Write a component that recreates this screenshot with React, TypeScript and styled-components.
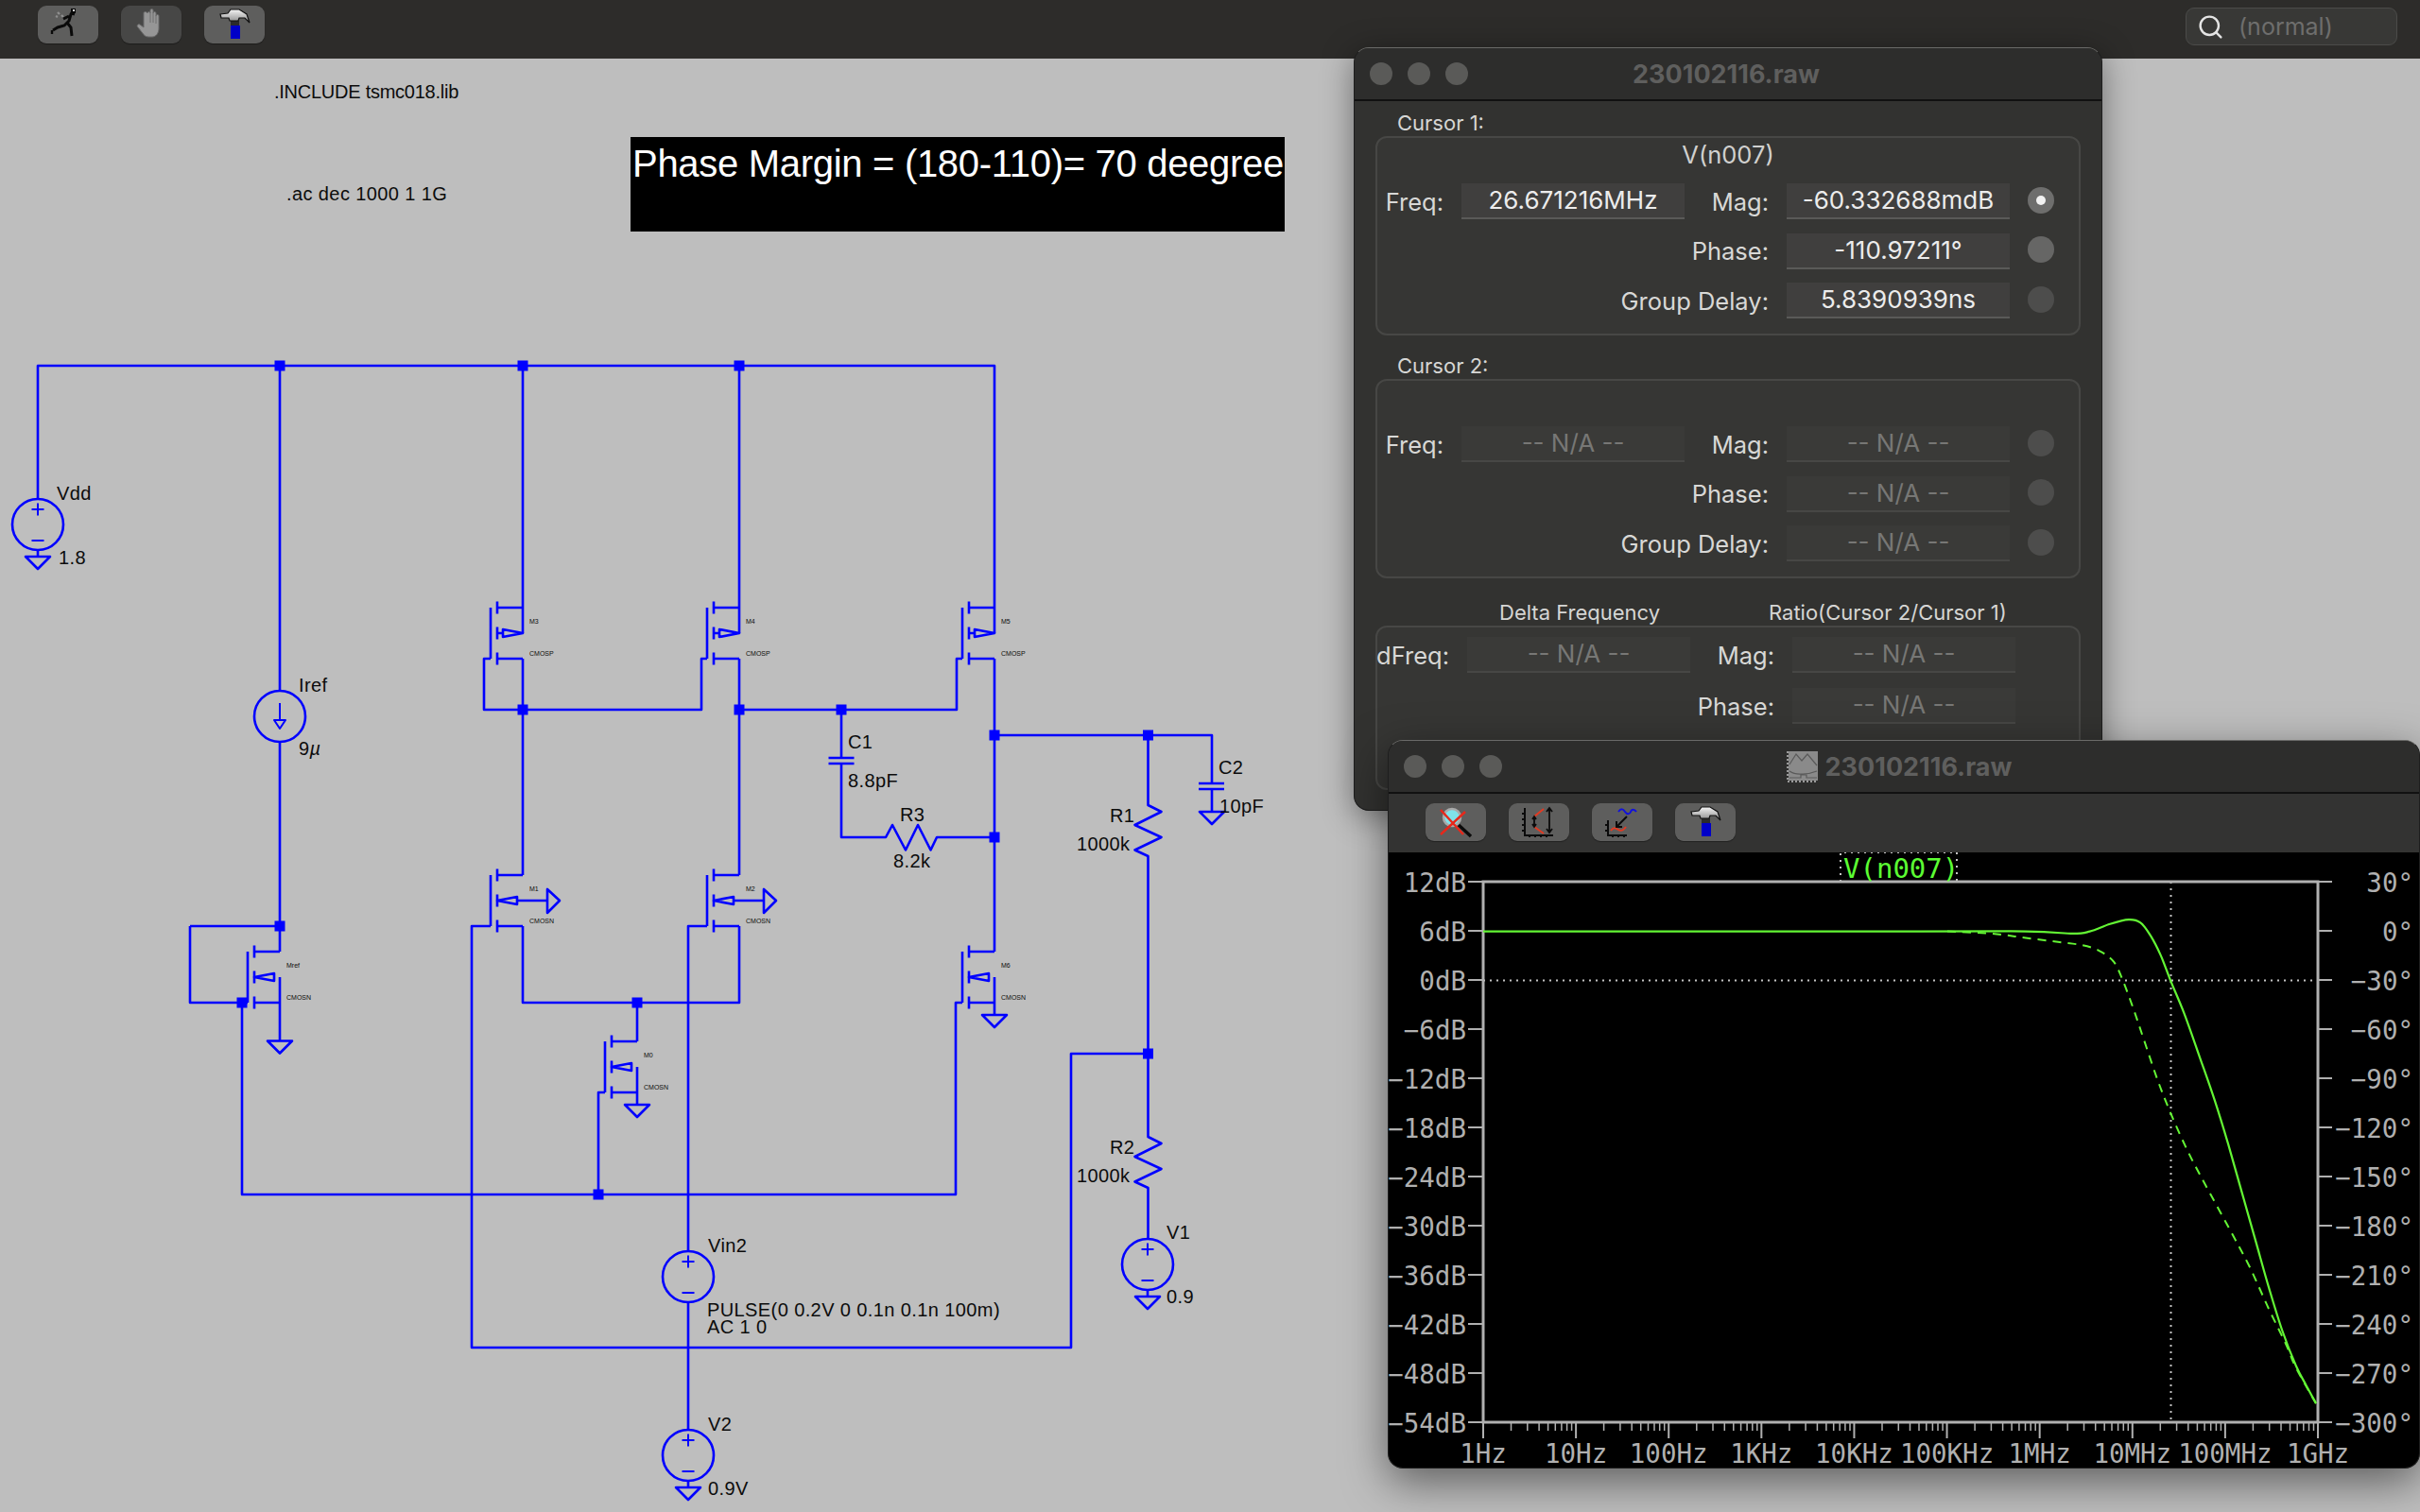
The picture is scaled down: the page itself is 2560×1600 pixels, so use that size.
import React from "react";
import styled, { createGlobalStyle } from "styled-components";
import { Search } from "lucide-react";

const GlobalStyle = createGlobalStyle`
  html, body {
    margin: 0;
    padding: 0;
    background: #bebebe;
    font-family: "Liberation Sans", Arial, sans-serif;
  }
`;

const Page = styled.div`
  position: relative;
  width: 2560px;
  height: 1600px;
  display: flex;
  flex-direction: column;
  overflow: hidden;
  background: #bebebe;
`;

const TopBar = styled.header`
  height: 62px;
  flex: none;
  box-sizing: border-box;
  padding: 6px 24px 0 40px;
  display: flex;
  align-items: flex-start;
  gap: 24px;
  background: #2d2c2a;
`;

const ToolButton = styled.button<{ $dim?: boolean }>`
  width: 64px;
  height: 40px;
  flex: none;
  padding: 0;
  border: none;
  border-radius: 9px;
  background: ${(p) => (p.$dim ? "#474746" : "#5e5e5d")};
  box-shadow: 0 1px 1px rgba(0, 0, 0, 0.35);
  svg {
    display: block;
  }
`;

const SearchBox = styled.div`
  margin-left: auto;
  margin-top: 2px;
  width: 224px;
  height: 40px;
  box-sizing: border-box;
  display: flex;
  align-items: center;
  gap: 15px;
  padding-left: 11px;
  border: 1px solid #4b4b49;
  border-radius: 9px;
  background: #383836;
  color: #e4e4e4;
  font-family: Inter, sans-serif;
  span {
    font-size: 25px;
    color: #6e6e6d;
  }
`;

const Canvas = styled.main`
  flex: 1;
  position: relative;
`;

const Schematic = styled.svg`
  display: block;
`;

const Wire = styled.path<{ $thin?: boolean }>`
  fill: none;
  stroke: #0000ff;
  stroke-width: ${(p) => (p.$thin ? 2 : 2.6)}px;
  stroke-linejoin: round;
`;

const Dot = styled.rect`
  fill: #0000ff;
`;

const Label = styled.text<{ $small?: boolean; $tight?: boolean }>`
  font-family: "Liberation Sans", Arial, sans-serif;
  font-size: ${(p) => (p.$small ? 7 : 20)}px;
  letter-spacing: ${(p) => (p.$small ? 0 : p.$tight ? -0.25 : 0.4)}px;
  fill: #0c0c0c;
  dominant-baseline: central;
`;

const NoteBox = styled.div`
  position: absolute;
  left: 667px;
  top: 83px;
  width: 692px;
  height: 100px;
  box-sizing: border-box;
  padding: 5px 0 0 2px;
  background: #000;
  color: #fff;
  font-size: 40px;
  letter-spacing: -0.3px;
  line-height: 46px;
  white-space: nowrap;
`;

const Window = styled.section<{ $left: number; $top: number; $width: number; $height: number; $shadow: string }>`
  position: absolute;
  left: ${(p) => p.$left}px;
  top: ${(p) => p.$top}px;
  width: ${(p) => p.$width}px;
  height: ${(p) => p.$height}px;
  box-sizing: border-box;
  display: flex;
  flex-direction: column;
  overflow: hidden;
  border: 1px solid #1e1e1e;
  border-top-color: #6a6a68;
  border-radius: 16px;
  background: #323230;
  box-shadow: ${(p) => p.$shadow};
`;

const TitleBar = styled.div`
  height: 56px;
  flex: none;
  box-sizing: border-box;
  display: grid;
  grid-template-columns: 1fr auto 1fr;
  align-items: center;
  border-bottom: 2px solid #111;
  background: #2d2d2c;
`;

const Lights = styled.div`
  display: flex;
  gap: 16px;
  padding-left: 16px;
`;

const Light = styled.i`
  width: 24px;
  height: 24px;
  border-radius: 50%;
  background: #5a5a58;
`;

const TitleText = styled.div<{ $nudge: number }>`
  display: flex;
  align-items: center;
  gap: 7px;
  margin-right: ${(p) => p.$nudge}px;
  font-family: Inter, sans-serif;
  font-size: 27px;
  font-weight: 700;
  color: #5f5f5e;
`;

const Panel = styled.div`
  padding: 9px 22px 0;
  display: flex;
  flex-direction: column;
  font-family: Inter, sans-serif;
  color: #dcdcdc;
`;

const Caption = styled.div<{ $gap: number }>`
  height: 28px;
  line-height: 28px;
  margin-top: ${(p) => p.$gap}px;
  padding-left: 23px;
  font-size: 22px;
  color: #d6d6d4;
`;

const HeaderCaptions = styled.div`
  height: 28px;
  line-height: 28px;
  margin-top: 22px;
  padding-left: 131px;
  display: grid;
  grid-template-columns: 285px auto;
  font-size: 22px;
  color: #d6d6d4;
`;

const GroupBox = styled.div<{ $height: number; $pad: number; $gap: number }>`
  height: ${(p) => p.$height}px;
  box-sizing: border-box;
  padding-top: ${(p) => p.$pad}px;
  display: flex;
  flex-direction: column;
  gap: ${(p) => p.$gap}px;
  position: relative;
  border: 2px solid #474745;
  border-radius: 12px;
  background: #363634;
`;

const TraceName = styled.div`
  position: absolute;
  top: 0;
  left: 0;
  right: 0;
  height: 36px;
  line-height: 36px;
  text-align: center;
  font-size: 25.5px;
  color: #d0d0ce;
`;

const Row = styled.div<{ $first: number }>`
  display: grid;
  grid-template-columns: ${(p) => p.$first}px 236px 70px 236px 28px;
  column-gap: 19px;
  align-items: center;
  height: 38px;
`;

const FieldLabel = styled.label<{ $span?: boolean }>`
  ${(p) => (p.$span ? "grid-column: 1 / 4;" : "")}
  justify-self: end;
  white-space: nowrap;
  font-size: 25.5px;
  color: #d8d8d6;
`;

const Field = styled.div<{ $off?: boolean }>`
  height: 38px;
  box-sizing: border-box;
  line-height: 35px;
  text-align: center;
  font-size: 26px;
  color: ${(p) => (p.$off ? "#777775" : "#ececec")};
  background: ${(p) => (p.$off ? "#3a3a38" : "#403f3e")};
  border-bottom: 2px solid ${(p) => (p.$off ? "#474745" : "#5a5a58")};
`;

const Radio = styled.span<{ $tone: string; $on?: boolean }>`
  width: 28px;
  height: 28px;
  margin-top: -3px;
  display: flex;
  align-items: center;
  justify-content: center;
  border-radius: 50%;
  background: ${(p) => p.$tone};
  &::after {
    content: "";
    width: 10px;
    height: 10px;
    border-radius: 50%;
    background: ${(p) => (p.$on ? "#f2f2f2" : "transparent")};
  }
`;

const PlotTools = styled.div`
  height: 62px;
  flex: none;
  box-sizing: border-box;
  padding: 10px 0 0 39px;
  display: flex;
  gap: 24px;
  background: #333332;
`;

const Plot = styled.svg`
  display: block;
  flex: 1;
  background: #000;
`;

const AxisText = styled.text<{ $green?: boolean }>`
  font-family: "DejaVu Sans Mono", monospace;
  font-size: ${(p) => (p.$green ? 29 : 27.5)}px;
  fill: ${(p) => (p.$green ? "#5cff33" : "#b0b0b0")};
  dominant-baseline: central;
`;

const AxisLine = styled.path<{ $weight: number }>`
  fill: none;
  stroke: #b0b0b0;
  stroke-width: ${(p) => p.$weight}px;
`;

const GridLine = styled.path`
  fill: none;
  stroke: #c4c4c4;
  stroke-width: 2px;
  stroke-dasharray: 2 5;
`;

const Trace = styled.path<{ $dashed?: boolean }>`
  fill: none;
  stroke: #63f534;
  stroke-width: ${(p) => (p.$dashed ? 2 : 2.2)}px;
  stroke-dasharray: ${(p) => (p.$dashed ? "9 7" : "none")};
`;

/* ---- toolbar icons ---- */

const Runner = () => (
  <svg width="64" height="40" viewBox="0 0 64 40">
    <path d="M21 7l2 2M25 10l2 2M19 11l2 1" stroke="#8f8f8f" strokeWidth="2.4" fill="none" />
    <path
      d="M38 4l-3 5-2 7-5 5-7 2-5 3M31 18l4 5 1 9M33 11l-6 3M36 8l3 1"
      stroke="#0a0a0a"
      strokeWidth="3"
      fill="none"
    />
    <rect x="35" y="3" width="5" height="5" fill="#0a0a0a" />
    <rect x="37" y="4" width="2" height="2" fill="#ddd" />
    <path d="M15 26v4" stroke="#0a0a0a" strokeWidth="2.4" />
  </svg>
);

const Hand = () => (
  <svg width="64" height="40" viewBox="0 0 64 40">
    <path
      d="M28 8c0-2 3-2 3 0V5c0-2 3-2 3 0v3c0-2 3-2 3 0v3c0-2 3-2 3 0v13c0 5-3 9-7 9h-4c-3 0-5-2-7-5l-4-5c-2-2 0-4 2-3l4 3V8c0-2 3-2 4 0z"
      fill="#969696"
      stroke="#6a6a6a"
      strokeWidth="1"
    />
    <path d="M31 8v10M34 8v10M37 11v8" stroke="#6f6f6f" strokeWidth="1" />
  </svg>
);

const Hammer = () => (
  <svg width="64" height="40" viewBox="0 0 64 40">
    <defs>
      <linearGradient id="steel" x1="0" y1="0" x2="0" y2="1">
        <stop offset="0" stopColor="#f4f4f4" />
        <stop offset="1" stopColor="#8b8b8b" />
      </linearGradient>
    </defs>
    <rect x="28" y="16" width="9" height="6" fill="#2b2b2b" />
    <rect x="28" y="21" width="10" height="14" fill="#0000c8" />
    <path
      d="M17 9l8-1 3-4h9l8 5 3 9-5-5-6 0-1 3h-9l-1-3-8 0z"
      fill="url(#steel)"
      stroke="#111"
      strokeWidth="1.2"
    />
  </svg>
);

const ZoomOut = () => (
  <svg width="64" height="40" viewBox="0 0 64 40">
    <path d="M35 23l13 12" stroke="#0b0b0b" strokeWidth="3.4" />
    <circle cx="28" cy="15" r="9" fill="#7fe3ea" stroke="#a9a9a9" strokeWidth="2.5" />
    <path d="M16 7l24 26M42 9L16 33" stroke="#e8271a" strokeWidth="2.4" />
  </svg>
);

const AutoScale = () => (
  <svg width="64" height="40" viewBox="0 0 64 40">
    <path d="M17 5v29h30" stroke="#0b0b0b" strokeWidth="2" fill="none" />
    <path d="M14 11h3M14 17h3M14 23h3M14 29h3M22 36v-2M28 36v-2M34 36v-2M40 36v-2" stroke="#0b0b0b" strokeWidth="2" />
    <path d="M27 14l10-8M27 25l10 7" stroke="#e23a22" strokeWidth="2" />
    <path d="M43 5v26M40 9l3-4 3 4M40 27l3 4 3-4M27 14v11M25 17l2-3 2 3M25 22l2 3 2-3" stroke="#0b0b0b" strokeWidth="1.8" fill="none" />
  </svg>
);

const TraceScale = () => (
  <svg width="64" height="40" viewBox="0 0 64 40">
    <path d="M17 18v16h20" stroke="#0b0b0b" strokeWidth="2" fill="none" />
    <path d="M14 23h3M14 29h3M22 36v-2M28 36v-2M34 36v-2" stroke="#0b0b0b" strokeWidth="2" />
    <path d="M20 29c3-4 5-3 8-1s5 1 8-3" stroke="#e23a22" strokeWidth="2" fill="none" />
    <path d="M28 9c3-4 5-3 7 0s5 3 6 0 4-3 6 0" stroke="#1111dd" strokeWidth="2" fill="none" />
    <path d="M37 14L26 25M26 19v6h6" stroke="#0b0b0b" strokeWidth="2" fill="none" />
  </svg>
);

const TraceIcon = () => (
  <svg width="34" height="34" viewBox="0 0 34 34">
    <rect x="2" y="1" width="31" height="31" fill="#8a8a8a" />
    <path d="M3 15l7-11 6 7 6-7 10 12M3 22c6 4 10 3 14 3s10-1 15-3M3 29h12v-3h6v3h11" stroke="#5a5a5a" strokeWidth="1.2" fill="none" />
    <path d="M1 1v32h32" stroke="#9a9a9a" strokeWidth="2" strokeDasharray="2 2" fill="none" />
  </svg>
);

/* ---- schematic parts, all in page coordinates ---- */

const Junction = ({ x, y }: { x: number; y: number }) => <Dot x={x - 5.5} y={y - 5.5} width="11" height="11" />;

const Ground = ({ x, y }: { x: number; y: number }) => (
  <Wire d={`M${x - 13} ${y}H${x + 13}L${x} ${y + 13}Z`} />
);

const VoltageSource = ({ x, y }: { x: number; y: number }) => (
  <>
    <circle cx={x} cy={y} r="27" fill="none" stroke="#0000ff" strokeWidth="2.6" />
    <Wire $thin d={`M${x - 6.5} ${y - 16}H${x + 6.5}M${x} ${y - 22.5}V${y - 9.5}M${x - 6.5} ${y + 17}H${x + 6.5}`} />
  </>
);

type MosProps = { d: number; t: number; kind: "P" | "N"; name: string; model: string };

const Mos = ({ d, t, kind, name, model }: MosProps) => {
  const mid = t + 27;
  const src = t + 54;
  const bar = d - 34;
  const ch = d - 27;
  const body =
    kind === "P"
      ? `M${ch} ${mid}H${d - 21}M${d - 21} ${mid - 4}L${d} ${mid}L${d - 21} ${mid + 4}Z`
      : `M${ch} ${mid}L${ch + 21} ${mid - 4}V${mid + 4}Z`;
  return (
    <>
      <Wire
        d={`M${bar} ${t}V${src}M${ch} ${t - 6.5}V${t + 6.5}M${ch} ${mid - 6.5}V${mid + 6.5}M${ch} ${src - 6.5}V${src + 6.5}M${ch} ${t}H${d}M${ch} ${src}H${d}`}
      />
      <Wire d={body} />
      <Label $small x={d + 7} y={t + 14.5}>
        {name}
      </Label>
      <Label $small x={d + 7} y={t + 48}>
        {model}
      </Label>
    </>
  );
};

const nets = [
  "M40 527V387H1052V643",
  "M296 387V731M296 785V1007",
  "M553 387V670",
  "M782 387V670",
  "M1052 670V643",
  "M201 980H296M201 980V1061H262",
  "M256 1061V1264H1011V1061H1018",
  // mirror gates
  "M519 697H512V751H742V697H748",
  "M782 751H1012V697H1018",
  // drains through to the diff pair
  "M553 697V926",
  "M782 697V926",
  "M1052 697V1007",
  "M296 1034V1101",
  "M674 1061V1102M674 1129V1169",
  "M553 980V1061H782V980",
  "M1052 1034V1074",
  // input pair gates
  "M519 980H499V1426H1133V1115H1214.5",
  "M748 980H728V1324M728 1378V1513",
  "M640 1156H633V1264",
  // compensation and output
  "M890 751V802M876.5 802H903.5M876.5 808H903.5M890 808V886H937L944 873L958 899.5L971 873L984.5 899.5L991 886H1052",
  "M1052 778H1282V829M1268 829H1295M1268 835H1295M1282 835V859",
  "M1214.5 778V852L1228.5 859L1200.5 873L1228.5 886L1200.5 899.5L1214.5 906V1203L1228.5 1210L1200.5 1224L1228.5 1237L1200.5 1250.5L1214.5 1257V1311",
  // pieces of source stubs
  "M40 582V589",
  "M728 1567V1574",
  "M1214 1365V1372",
  // M1, M2 bulk symbols
  "M546 953H579M579 941V966L592 953Z",
  "M775 953H808M808 941V966L821 953Z",
];

const junctions: [number, number][] = [
  [296, 387], [553, 387], [782, 387],
  [553, 751], [782, 751], [890, 751],
  [1052, 778], [1214.5, 778], [1052, 886],
  [296, 980], [256, 1061], [674, 1061],
  [633, 1264], [1214.5, 1115],
];

const texts: [string, number, number][] = [
  [".ac dec 1000 1 1G", 303, 205],
  ["Vdd", 60, 522],
  ["1.8", 62, 590],
  ["Iref", 316, 725],
  ["C1", 897, 785],
  ["8.8pF", 897, 826],
  ["R3", 952, 862],
  ["8.2k", 945, 911],
  ["C2", 1289, 812],
  ["10pF", 1290, 853],
  ["R1", 1174, 863],
  ["1000k", 1139, 893],
  ["R2", 1174, 1214],
  ["1000k", 1139, 1244],
  ["Vin2", 749, 1318],
  ["PULSE(0 0.2V 0 0.1n 0.1n 100m)", 748, 1386],
  ["AC 1 0", 748, 1404],
  ["V2", 749, 1507],
  ["0.9V", 749, 1575],
  ["V1", 1234, 1304],
  ["0.9", 1234, 1372],
];

/* ---- plot data ---- */

const solid: [number, number][] = [
  [1569, 985.6], [2000, 985.6], [2142.9, 985.6], [2192.9, 987.9], [2210.7, 985.6], [2232.1, 977.8], [2251.8, 973.2],
  [2264.3, 976.4], [2275, 990.2], [2285.7, 1010.9], [2296.4, 1038.4], [2310.7, 1072.8], [2328.6, 1123.3],
  [2342.9, 1164.7], [2357.1, 1210.6], [2371.4, 1261.1], [2385.7, 1311.6], [2400, 1362.1], [2414.3, 1408],
  [2428.6, 1444.7], [2439.3, 1465.4], [2450, 1485.1],
];

const dashed: [number, number][] = [
  [2060, 985.6], [2107, 988], [2143, 992.5], [2179, 997], [2203, 1000.3], [2221, 1006.3], [2236, 1017.7], [2246, 1038.4],
  [2257, 1068], [2268, 1100.4], [2282, 1141.7], [2296.4, 1178.4], [2314, 1217.5], [2332, 1252], [2357, 1297.8],
  [2379, 1339], [2400, 1385], [2418, 1422], [2428.6, 1447], [2450, 1485.1],
];

// catmull-rom through the sampled points
const smooth = (p: [number, number][]) => {
  let out = `M${p[0][0]} ${p[0][1]}`;
  for (let i = 0; i < p.length - 1; i++) {
    const a = p[Math.max(i - 1, 0)];
    const b = p[i];
    const c = p[i + 1];
    const e = p[Math.min(i + 2, p.length - 1)];
    const c1x = b[0] + (c[0] - a[0]) / 6;
    const c1y = b[1] + (c[1] - a[1]) / 6;
    const c2x = c[0] - (e[0] - b[0]) / 6;
    const c2y = c[1] - (e[1] - b[1]) / 6;
    out += `C${c1x.toFixed(1)} ${c1y.toFixed(1)} ${c2x.toFixed(1)} ${c2y.toFixed(1)} ${c[0]} ${c[1]}`;
  }
  return out;
};

const plotLeft = 1569;
const plotRight = 2452;
const plotTop = 933;
const plotBottom = 1505;
const rowStep = (plotBottom - plotTop) / 11;
const decade = (plotRight - plotLeft) / 9;

const dbLabels = ["12dB", "6dB", "0dB", "−6dB", "−12dB", "−18dB", "−24dB", "−30dB", "−36dB", "−42dB", "−48dB", "−54dB"];
const degLabels = ["30°", "0°", "−30°", "−60°", "−90°", "−120°", "−150°", "−180°", "−210°", "−240°", "−270°", "−300°"];
const freqLabels = ["1Hz", "10Hz", "100Hz", "1KHz", "10KHz", "100KHz", "1MHz", "10MHz", "100MHz", "1GHz"];

const majorTicks = freqLabels.map((_, i) => `M${plotLeft + i * decade} ${plotBottom}V1522`).join("");
const minorTicks = Array.from({ length: 9 }, (_, i) =>
  [2, 3, 4, 5, 6, 7, 8, 9]
    .map((n) => `M${(plotLeft + (i + Math.log10(n)) * decade).toFixed(1)} ${plotBottom}V1514`)
    .join("")
).join("");
const rowTicks = dbLabels.map((_, i) => {
  const y = plotTop + i * rowStep;
  return `M1553 ${y}H${plotLeft}M${plotRight} ${y}H2467`;
}).join("");

const CursorRows = ({ values, tones, off }: { values: string[]; tones: string[]; off?: boolean }) => (
  <>
    <Row $first={70}>
      <FieldLabel>Freq:</FieldLabel>
      <Field $off={off}>{values[0]}</Field>
      <FieldLabel>Mag:</FieldLabel>
      <Field $off={off}>{values[1]}</Field>
      <Radio $tone={tones[0]} $on={!off} />
    </Row>
    <Row $first={70}>
      <FieldLabel $span>Phase:</FieldLabel>
      <Field $off={off}>{values[2]}</Field>
      <Radio $tone={tones[1]} />
    </Row>
    <Row $first={70}>
      <FieldLabel $span>Group Delay:</FieldLabel>
      <Field $off={off}>{values[3]}</Field>
      <Radio $tone={tones[2]} />
    </Row>
  </>
);

const App = () => {
  return (
    <Page>
      <GlobalStyle />
      <TopBar>
        <ToolButton><Runner /></ToolButton>
        <ToolButton $dim><Hand /></ToolButton>
        <ToolButton><Hammer /></ToolButton>
        <SearchBox>
          <Search size={29} strokeWidth={2} />
          <span>(normal)</span>
        </SearchBox>
      </TopBar>
      <Canvas>
        <Schematic width="2560" height="1538" viewBox="0 62 2560 1538">
          {nets.map((d) => (
            <Wire key={d} d={d} />
          ))}
          {junctions.map(([x, y]) => (
            <Junction key={`${x}-${y}`} x={x} y={y} />
          ))}
          <Mos d={553} t={643} kind="P" name="M3" model="CMOSP" />
          <Mos d={782} t={643} kind="P" name="M4" model="CMOSP" />
          <Mos d={1052} t={643} kind="P" name="M5" model="CMOSP" />
          <Mos d={553} t={926} kind="N" name="M1" model="CMOSN" />
          <Mos d={782} t={926} kind="N" name="M2" model="CMOSN" />
          <Mos d={1052} t={1007} kind="N" name="M6" model="CMOSN" />
          <Mos d={296} t={1007} kind="N" name="Mref" model="CMOSN" />
          <Mos d={674} t={1102} kind="N" name="M0" model="CMOSN" />
          <VoltageSource x={40} y={555} />
          <VoltageSource x={728} y={1351} />
          <VoltageSource x={728} y={1540} />
          <VoltageSource x={1214} y={1338} />
          <circle cx="296" cy="758" r="27" fill="none" stroke="#0000ff" strokeWidth="2.6" />
          <Wire $thin d="M296 744V762M290 762H302L296 771Z" />
          <Ground x={40} y={589} />
          <Ground x={296} y={1101.5} />
          <Ground x={674} y={1169} />
          <Ground x={1052} y={1074} />
          <Ground x={1282} y={859} />
          <Ground x={728} y={1574} />
          <Ground x={1214} y={1372} />
          <Label $tight x={290} y={97}>
            .INCLUDE tsmc018.lib
          </Label>
          {texts.map(([t, x, y]) => (
            <Label key={`${t}${y}`} x={x} y={y}>
              {t}
            </Label>
          ))}
          <Label x={316} y={792}>
            9<tspan fontStyle="italic">µ</tspan>
          </Label>
        </Schematic>
        <NoteBox>Phase Margin = (180-110)= 70 deegree</NoteBox>
      </Canvas>

      <Window $left={1432} $top={50} $width={792} $height={808} $shadow="0 6px 34px rgba(0,0,0,0.42)">
        <TitleBar>
          <Lights>
            <Light />
            <Light />
            <Light />
          </Lights>
          <TitleText $nudge={4}>230102116.raw</TitleText>
        </TitleBar>
        <Panel>
          <Caption $gap={0}>Cursor 1:</Caption>
          <GroupBox $height={211} $pad={48} $gap={14.5}>
            <TraceName>V(n007)</TraceName>
            <CursorRows
              values={["26.671216MHz", "-60.332688mdB", "-110.97211°", "5.8390939ns"]}
              tones={["#6e6e6d", "#666665", "#4d4d4c"]}
            />
          </GroupBox>
          <Caption $gap={18}>Cursor 2:</Caption>
          <GroupBox $height={211} $pad={48} $gap={14.5}>
            <CursorRows
              off
              values={["-- N/A --", "-- N/A --", "-- N/A --", "-- N/A --"]}
              tones={["#4d4d4c", "#4d4d4c", "#4d4d4c"]}
            />
          </GroupBox>
          <HeaderCaptions>
            <span>Delta Frequency</span>
            <span>Ratio(Cursor 2/Cursor 1)</span>
          </HeaderCaptions>
          <GroupBox $height={174} $pad={10} $gap={16}>
            <Row $first={76}>
              <FieldLabel>dFreq:</FieldLabel>
              <Field $off>-- N/A --</Field>
              <FieldLabel>Mag:</FieldLabel>
              <Field $off>-- N/A --</Field>
            </Row>
            <Row $first={76}>
              <FieldLabel $span>Phase:</FieldLabel>
              <Field $off>-- N/A --</Field>
            </Row>
          </GroupBox>
        </Panel>
      </Window>

      <Window $left={1468} $top={783} $width={1092} $height={771} $shadow="0 14px 46px rgba(0,0,0,0.5)">
        <TitleBar>
          <Lights>
            <Light />
            <Light />
            <Light />
          </Lights>
          <TitleText $nudge={10}>
            <TraceIcon />
            230102116.raw
          </TitleText>
        </TitleBar>
        <PlotTools>
          <ToolButton><ZoomOut /></ToolButton>
          <ToolButton><AutoScale /></ToolButton>
          <ToolButton><TraceScale /></ToolButton>
          <ToolButton><Hammer /></ToolButton>
        </PlotTools>
        <Plot viewBox="1469 902 1090 651" width="1090" height="651">
          <GridLine d={`M${plotLeft} 1037.5H${plotRight}M2296.5 ${plotTop}V1502`} />
          <GridLine d="M1947 933V902H2070V933" />
          <AxisLine $weight={3} d={`M${plotLeft} ${plotBottom}V${plotTop}H${plotRight}V${plotBottom}Z`} />
          <AxisLine $weight={2} d={rowTicks} />
          <AxisLine $weight={2} d={majorTicks} />
          <AxisLine $weight={1.5} d={minorTicks} />
          <Trace d={smooth(solid)} />
          <Trace $dashed d={smooth(dashed)} />
          <AxisText $green x="1950" y="919">V(n007)</AxisText>
          {dbLabels.map((t, i) => (
            <AxisText key={t} x="1551" y={plotTop + i * rowStep + 1} textAnchor="end">
              {t}
            </AxisText>
          ))}
          {degLabels.map((t, i) => (
            <AxisText key={t} x="2553" y={plotTop + i * rowStep + 1} textAnchor="end">
              {t}
            </AxisText>
          ))}
          {freqLabels.map((t, i) => (
            <AxisText key={t} x={plotLeft + i * decade} y="1538" textAnchor="middle">
              {t}
            </AxisText>
          ))}
        </Plot>
      </Window>
    </Page>
  );
};

export default App;
